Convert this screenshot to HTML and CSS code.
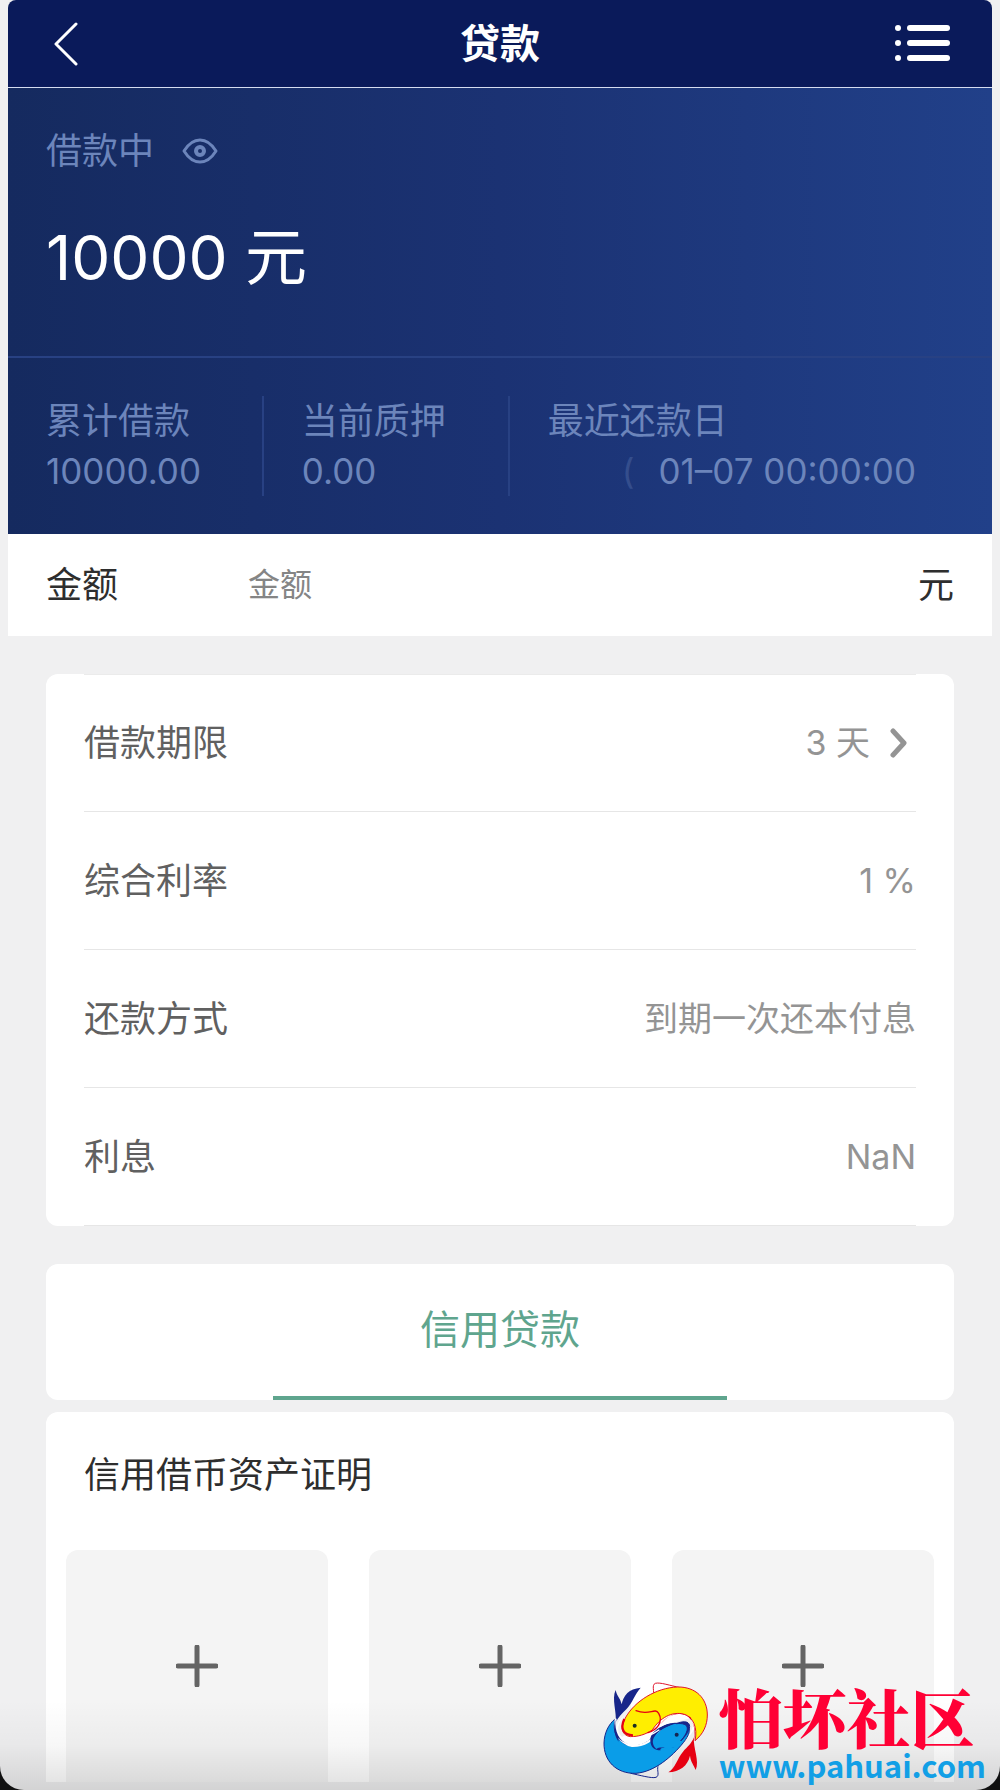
FILE: index.html
```html
<!DOCTYPE html>
<html lang="zh-CN">
<head>
  <meta charset="utf-8">
  <meta name="viewport" content="width=device-width, initial-scale=1">
  <title>贷款</title>
  <link rel="stylesheet" href="styles.css">
</head>
<body>
  <div class="screen">
    <header class="topbar">
      <button class="icon-button back" type="button" aria-label="返回">
        <svg width="24" height="44" viewBox="0 0 24 44"><path d="M22 2 2 22l20 20" fill="none" stroke="currentColor" stroke-width="3" stroke-linecap="round" stroke-linejoin="round"/></svg>
      </button>
      <h1 class="topbar-title">贷款</h1>
      <button class="icon-button" type="button" aria-label="菜单">
        <svg width="56" height="38" viewBox="0 0 56 38" fill="currentColor">
          <circle cx="4" cy="3" r="3"/><circle cx="4" cy="18" r="3"/><circle cx="4" cy="33" r="3"/>
          <rect x="13" y="0" width="43" height="6" rx="3"/><rect x="13" y="15" width="43" height="6" rx="3"/><rect x="13" y="30" width="43" height="6" rx="3"/>
        </svg>
      </button>
    </header>

    <main class="content">
      <section class="summary">
        <div class="balance">
          <div class="balance-label">
            <span>借款中</span>
            <button class="icon-button" type="button" aria-label="显示或隐藏金额">
              <svg width="36" height="26" viewBox="0 0 36 26" fill="none" stroke="currentColor" stroke-width="3"><path d="M2 13C7 5 12 2 18 2s11 3 16 11c-5 8-10 11-16 11S7 21 2 13Z" stroke-linejoin="round"/><circle cx="18" cy="13" r="4" stroke-width="4"/></svg>
            </button>
          </div>
          <p class="balance-value">10000 元</p>
        </div>
        <dl class="stats">
          <div class="stat"><dt>累计借款</dt><dd>10000.00</dd></div>
          <div class="stat"><dt>当前质押</dt><dd>0.00</dd></div>
          <div class="stat stat-date"><dt>最近还款日</dt><dd><span class="faded">(</span>01–07 00:00:00</dd></div>
        </dl>
      </section>

      <div class="amount">
        <label class="amount-label" for="amount">金额</label>
        <input class="amount-input" id="amount" type="text" inputmode="decimal" placeholder="金额">
        <span>元</span>
      </div>

      <dl class="card terms">
        <div class="term">
          <dt>借款期限</dt>
          <dd>
            <button class="term-picker" type="button">3 天
              <svg width="18" height="30" viewBox="0 0 18 30"><path d="m3 3 11 12L3 27" fill="none" stroke="currentColor" stroke-width="5" stroke-linecap="round" stroke-linejoin="round"/></svg>
            </button>
          </dd>
        </div>
        <div class="term"><dt>综合利率</dt><dd>1 %</dd></div>
        <div class="term"><dt>还款方式</dt><dd>到期一次还本付息</dd></div>
        <div class="term"><dt>利息</dt><dd>NaN</dd></div>
      </dl>

      <nav class="card tabs">
        <button class="tab" type="button">信用贷款</button>
      </nav>

      <section class="card proof">
        <h2 class="proof-title">信用借币资产证明</h2>
        <div class="uploads">
          <button class="upload" type="button" aria-label="上传证明一"><svg width="42" height="42" viewBox="0 0 42 42"><path d="M21 2v38M2 21h38" stroke="currentColor" stroke-width="5" stroke-linecap="round"/></svg></button>
          <button class="upload" type="button" aria-label="上传证明二"><svg width="42" height="42" viewBox="0 0 42 42"><path d="M21 2v38M2 21h38" stroke="currentColor" stroke-width="5" stroke-linecap="round"/></svg></button>
          <button class="upload" type="button" aria-label="上传证明三"><svg width="42" height="42" viewBox="0 0 42 42"><path d="M21 2v38M2 21h38" stroke="currentColor" stroke-width="5" stroke-linecap="round"/></svg></button>
        </div>
      </section>
    </main>

    <div class="fade"></div>
    <a class="brand" href="#">
      <svg class="brand-logo" width="107" height="99" viewBox="50 64 321 297">
        <!-- tails -->
        <path d="M91 188C95 158 78 118 91 91c4 20 14 24 18 43 5-27 22-47 57-50-17 18-24 45-43 65-13 13-23 22-32 39Z" fill="#17268a"/>
        <path d="M326 233c-4 30 18 72 5 98-6-16-15-24-17-43-7 31-31 48-65 50 22-14 26-41 44-62 13-14 26-25 33-43Z" fill="#e60012"/>
        <!-- fins -->
        <path d="M204 108c4-12-6-32 6-37 14-4 45 7 75 13" fill="none" stroke="#e0152b" stroke-width="3"/>
        <path d="M218 320c-4 12 6 28-6 33-14 4-50-7-76-12" fill="none" stroke="#17268a" stroke-width="3"/>
        <!-- white gap between the fish -->
        <path d="M120 165c-41 29-39 87 4 92 52 4 89-15 112-61l77-20c24 14 1 61-46 93 54-37 79-78 56-104-47-28-86-20-122 17l-91 50c-20-17-12-45 10-67Z" fill="#fff"/>
        <!-- blue fish -->
        <path d="M89 178c-8 38 5 67 40 79 35 7 66-8 91-47 17-15 40-22 68-18 34 5 28 29 6 57-35 43-86 87-142 92-60 2-97-38-96-91 1-31 14-56 33-72Z" fill="#0a9de8" stroke="#17268a" stroke-width="3"/>
        <path d="M91 177c-6 41 12 74 49 82 42 1 66-20 85-49" fill="none" stroke="#fff" stroke-width="6"/>
        <path d="M90 180c-2 35 11 65 39 72-18-4-26-14-31-17l2 11c-13-17-17-43-10-66Z" fill="#17268a"/>
        <path d="M280 190c-41-1-86 22-85 53 1 20 12 29 31 29-5-9 12-9 42-7l-45-4c-35-26-1-57 57-71Z" fill="#17268a"/>
        <path d="M269 193c40-5 52 9 28 42-12 17-29 27-48 34-12-7-28-7-36-1-24-24-7-54 56-75Z" fill="#0a9de8"/>
        <path d="M273 192c42-4 41 20 13 52 43-42 31-70-13-52Z" fill="#17268a" stroke="#17268a" stroke-width="3"/>
        <circle cx="274" cy="225" r="6" fill="#142653"/>
        <!-- yellow fish -->
        <path d="M135 231c-26-4-31-27-15-56 27-50 92-91 157-93 54-1 89 34 89 84 0 30-12 57-37 77 9-38-6-72-32-79-38-11-74 12-96 47-22 14-42 20-66 20Z" fill="#ffee00" stroke="#e0152b" stroke-width="3"/>
        <path d="M225 194c21-28 57-42 82-25l9 4 3 12c11 17 13 38 8 57 5-40-7-73-35-78-25-5-45 5-67 30Z" fill="#e60012"/>
        <path d="M117 178c-14 30-2 48 26 49" fill="none" stroke="#e60012" stroke-width="7"/>
        <path d="M152 153c42 16 55-11 68 8 15 26-6 51-32 58" fill="none" stroke="#e60012" stroke-width="4" stroke-linecap="round"/>
        <path d="M136 235c32 2 62-7 86-25" fill="none" stroke="#fff" stroke-width="4"/>
        <circle cx="148" cy="198" r="6" fill="#1c2d20"/>
      </svg>
      <span class="brand-text">
        <strong class="brand-name">怕坏社区</strong>
        <span class="brand-url">www.pahuai.com</span>
      </span>
    </a>
  </div>
</body>
</html>
```
FILE: styles.css
```css
* {
  box-sizing: border-box;
}

html {
  background: #111;
}

body,
h1,
h2,
p,
dl,
dd {
  margin: 0;
}

body {
  font-family: Inter, "Noto Sans CJK SC", sans-serif;
  font-size: 36px;
  line-height: 50px;
  color: #2e2e2e;
}

button,
input {
  padding: 0;
  border: 0;
  background: none;
  color: inherit;
  font: inherit;
}

svg {
  display: block;
}

.screen {
  position: relative;
  display: flex;
  flex-direction: column;
  min-height: 100vh;
  padding: 0 8px 8px;
  overflow: hidden;
  border-radius: 0 0 24px 24px;
  background: #f0f0f1;
}

.topbar {
  display: flex;
  align-items: center;
  justify-content: space-between;
  height: 88px;
  padding: 0 42px 0 46px;
  border-bottom: 1px solid #d5dcf0;
  border-radius: 8px 8px 0 0;
  background: #0a1a5a;
  color: #fff;
}

.topbar .icon-button {
  display: flex;
  width: 56px;
}

.topbar .back {
  width: 52px;
}

.topbar-title {
  font-size: 40px;
  font-weight: 700;
}

.content {
  display: flex;
  flex: 1;
  flex-direction: column;
}

.summary {
  background: linear-gradient(90deg, #152a5f, #1b3273 50%, #214089);
  color: #6c85bb;
}

.balance {
  padding: 38px 38px 58px;
  border-bottom: 2px solid #284183;
}

.balance-label {
  display: flex;
  align-items: center;
  gap: 28px;
}

.balance-value {
  margin-top: 42px;
  color: #fff;
  font-size: 62px;
  line-height: 80px;
}

.stats {
  display: flex;
  padding: 38px 0;
}

.stat {
  width: 25%;
  padding-left: 38px;
  border-right: 2px solid #284183;
}

.stat:first-child {
  width: 26%;
}

.stat dd {
  font-size: 35px;
}

.stat-date {
  flex: 1;
  padding-right: 76px;
  border-right: 0;
}

.stat-date dd {
  text-align: right;
}

.faded {
  margin-right: 24px;
  opacity: 0.3;
}

.amount {
  display: flex;
  align-items: center;
  height: 102px;
  padding: 0 38px;
  background: #fff;
}

.amount-label {
  width: 202px;
}

.amount-input {
  flex: 1;
  min-width: 0;
  font-size: 32px;
}

.amount-input::placeholder {
  color: #858585;
  opacity: 1;
}

.card {
  margin: 0 38px;
  border-radius: 12px;
  background: #fff;
}

.terms {
  margin-top: 38px;
  padding: 0 38px;
}

.term {
  display: flex;
  align-items: center;
  justify-content: space-between;
  height: 138px;
  border-bottom: 1px solid #e6e6e6;
  color: #606060;
}

.term:first-child {
  border-top: 1px solid #ebebeb;
}

.term dd {
  color: #949494;
  font-size: 34px;
}

.term-picker {
  display: flex;
  align-items: center;
  gap: 20px;
  padding-right: 8px;
}

.tabs {
  display: flex;
  justify-content: center;
  margin-top: 38px;
}

.tab {
  width: 50%;
  height: 136px;
  border-bottom: 4px solid #5fa58e;
  color: #5fa58e;
  font-size: 40px;
}

.proof {
  flex: 1;
  margin-top: 12px;
  padding: 38px 20px 0;
  border-radius: 12px 12px 0 0;
}

.proof-title {
  padding-left: 18px;
  font-size: 36px;
  font-weight: 400;
}

.uploads {
  display: grid;
  grid-template-columns: repeat(3, 1fr);
  gap: 41px;
  margin-top: 50px;
}

.upload {
  display: flex;
  align-items: center;
  justify-content: center;
  height: 232px;
  border-radius: 12px 12px 0 0;
  background: #f4f4f4;
  color: #646464;
}

/* Shade along the lower edge of the screen */
.fade {
  position: absolute;
  inset: auto 0 0;
  height: 90px;
  background: linear-gradient(rgba(0, 0, 0, 0), rgba(0, 0, 0, 0.03) 50%, rgba(0, 0, 0, 0.12));
  pointer-events: none;
}

.brand {
  position: absolute;
  right: 14px;
  bottom: 10px;
  display: flex;
  align-items: center;
  gap: 10px;
  text-decoration: none;
}

.brand-text {
  display: flex;
  flex-direction: column;
}

.brand-name {
  color: #ff0035;
  font-family: "Noto Serif CJK SC", "Noto Sans CJK SC", serif;
  font-size: 64px;
  font-weight: 900;
  line-height: 70px;
}

.brand-url {
  color: #129fe6;
  font-family: "Noto Sans CJK SC", sans-serif;
  font-size: 31px;
  font-weight: 700;
  line-height: 30px;
}
```
